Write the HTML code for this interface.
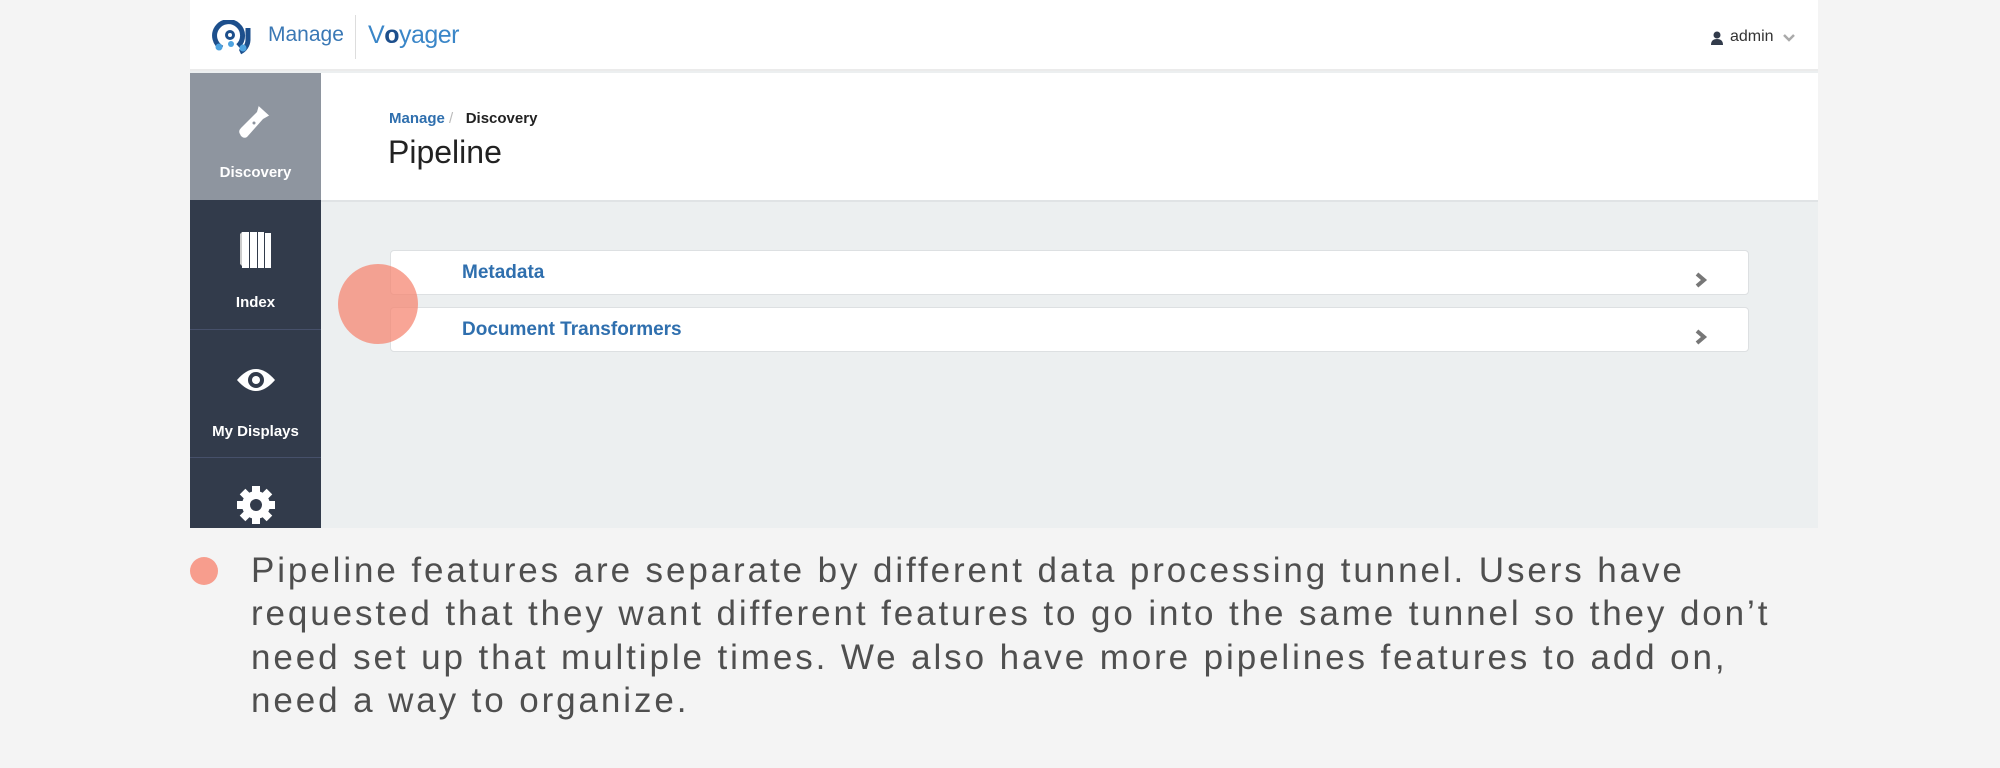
<!DOCTYPE html>
<html><head><meta charset="utf-8"><style>
*{margin:0;padding:0;box-sizing:border-box}
body{width:2000px;height:768px;background:#f4f4f4;font-family:"Liberation Sans",sans-serif;position:relative;overflow:hidden}
.app{position:absolute;left:190px;top:0;width:1628px;height:528px;background:#eceff0;overflow:hidden}
.hdr{position:absolute;left:0;top:0;width:1628px;height:71px;background:#fff;border-bottom:2px solid #ebebeb}
.side{position:absolute;left:0;top:73px;width:131px;height:455px;background:#323b4b}
.item{position:absolute;left:0;width:131px;color:#fff;font-weight:bold;font-size:15px;text-align:center}
.title{position:absolute;left:131px;top:73px;width:1497px;height:129px;background:#fff;border-bottom:2px solid #e0e3e5}
.card{position:absolute;left:200px;width:1359px;height:45px;background:#fff;border:1px solid #dde0e2;border-radius:4px}
.card span{position:absolute;left:71px;top:11px;font-size:19px;font-weight:bold;color:#2f6fae}
.card svg{position:absolute;right:40px;top:21px}
.txt{position:absolute;left:251px;top:549px;font-size:35px;line-height:43.4px;color:#4f4f4f;letter-spacing:2.9px;white-space:nowrap}
</style></head><body>
<div class="app">
 <div class="hdr">
  <svg style="position:absolute;left:22px;top:20px" width="42" height="36" viewBox="0 0 42 36">
   <path d="M10 28 A14 14 0 1 1 26 26" fill="none" stroke="#1d4f8c" stroke-width="5"/>
   <circle cx="18" cy="15" r="3.5" fill="none" stroke="#1d4f8c" stroke-width="3"/>
   <path d="M36 8 L36 20 A14 14 0 0 1 28 32" fill="none" stroke="#1d4f8c" stroke-width="5"/>
   <circle cx="7" cy="27" r="3.5" fill="#4da3e0"/><circle cx="19" cy="24" r="3" fill="#4da3e0"/><circle cx="31" cy="28" r="3.5" fill="#4da3e0"/>
  </svg>
  <div style="position:absolute;left:78px;top:23px;font-size:21px;color:#3a78b5">Manage</div>
  <div style="position:absolute;left:165px;top:15px;width:1px;height:44px;background:#ddd"></div>
  <div style="position:absolute;left:178px;top:21px;font-size:25px;color:#3a86c8;letter-spacing:-0.5px">V<b style="color:#1d4f8c">o</b>yager</div>
  <svg style="position:absolute;left:1520px;top:31px" width="14" height="14" viewBox="0 0 14 14"><circle cx="7" cy="4" r="3.5" fill="#323b4b"/><path d="M1 14 Q1 8 7 8 Q13 8 13 14Z" fill="#323b4b"/></svg>
  <div style="position:absolute;left:1540px;top:28px;font-size:16px;color:#333">admin</div>
  <svg style="position:absolute;left:1592px;top:33px" width="14" height="10" viewBox="0 0 14 10"><path d="M2 2 L7 7 L12 2" fill="none" stroke="#aaa" stroke-width="2.5"/></svg>
 </div>
 <div class="side">
  <div class="item" style="top:0;height:127px;background:#8e959f">
   <svg style="position:absolute;left:45px;top:28px" width="40" height="40" viewBox="0 0 40 40"><path d="M24 4 L35 14 L28 18 L12 36 Q9 38 6 35 L5 33 Q3 30 6 27 L22 11Z" fill="#fff"/><path d="M24 4 L35 14" stroke="#8e959f" stroke-width="2"/><circle cx="19" cy="22" r="1.5" fill="#8e959f"/></svg>
   <div style="position:absolute;top:91px;width:131px">Discovery</div>
  </div>
  <div class="item" style="top:127px;height:130px;border-bottom:1px solid #46506a">
   <svg style="position:absolute;left:48px;top:30px" width="36" height="40" viewBox="0 0 36 40"><path d="M2 4 L4 2 L4 36 L2 34Z" fill="#ccc"/><rect x="4" y="2" width="7" height="36" fill="#fff"/><rect x="12" y="2" width="7" height="36" fill="#fff"/><rect x="20" y="2" width="6" height="36" fill="#fff"/><rect x="27" y="3" width="6" height="35" fill="#fff"/></svg>
   <div style="position:absolute;top:94px;width:131px">Index</div>
  </div>
  <div class="item" style="top:258px;height:127px;border-bottom:1px solid #46506a">
   <svg style="position:absolute;left:46px;top:35px" width="40" height="28" viewBox="0 0 40 28"><path d="M1 14 Q20 -8 39 14 Q20 36 1 14Z" fill="#fff"/><circle cx="20" cy="14" r="8" fill="#323b4b"/><circle cx="20" cy="14" r="4" fill="#fff"/></svg>
   <div style="position:absolute;top:92px;width:131px">My Displays</div>
  </div>
  <svg style="position:absolute;left:46px;top:412px" width="40" height="40" viewBox="0 0 40 40"><g fill="#fff"><circle cx="20" cy="20" r="14"/><rect x="16" y="1" width="8" height="38"/><rect x="1" y="16" width="38" height="8"/><rect x="16" y="1" width="8" height="38" transform="rotate(45 20 20)"/><rect x="16" y="1" width="8" height="38" transform="rotate(-45 20 20)"/></g><circle cx="20" cy="20" r="6" fill="#323b4b"/></svg>
 </div>
 <div class="title">
  <div style="position:absolute;left:68px;top:37px;font-size:15px;font-weight:bold;color:#2f6fae">Manage <span style="color:#bbb;font-weight:normal">/</span> &nbsp; <span style="color:#222">Discovery</span></div>
  <div style="position:absolute;left:67px;top:61px;font-size:32px;color:#222">Pipeline</div>
 </div>
 <div class="card" style="top:250px"><span>Metadata</span><svg width="14" height="16" viewBox="0 0 14 16"><path d="M3 2 L10 8 L3 14" fill="none" stroke="#777" stroke-width="4"/></svg></div>
 <div class="card" style="top:307px"><span>Document Transformers</span><svg width="14" height="16" viewBox="0 0 14 16"><path d="M3 2 L10 8 L3 14" fill="none" stroke="#777" stroke-width="4"/></svg></div>
 <div style="position:absolute;left:148px;top:264px;width:80px;height:80px;border-radius:50%;background:rgba(245,130,110,0.72)"></div>
</div>
<div style="position:absolute;left:190px;top:557px;width:28px;height:28px;border-radius:50%;background:#f79d8d"></div>
<div class="txt">Pipeline features are separate by different data processing tunnel. Users have<br>requested that they want different features to go into the same tunnel so they don’t<br>need set up that multiple times. We also have more pipelines features to add on,<br>need a way to organize.</div>
</body></html>
